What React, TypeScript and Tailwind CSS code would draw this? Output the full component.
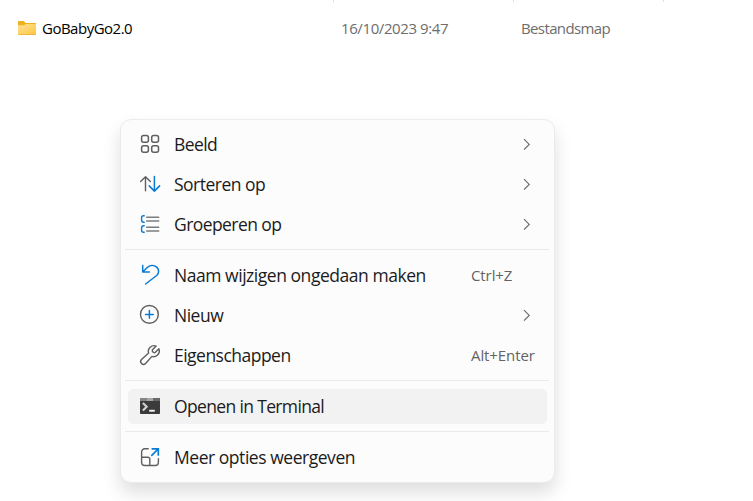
import type { ReactNode } from "react";

const GRAY = "#5f5f5f";
const BLUE = "#0a7bd4";

function Icon({ children }: { children: ReactNode }) {
  return (
    <svg width="24" height="24" viewBox="0 0 24 24" fill="none" stroke={GRAY} strokeWidth="1.4" strokeLinecap="round" strokeLinejoin="round" className="shrink-0">
      {children}
    </svg>
  );
}

const ViewIcon = () => (
  <Icon>
    <g strokeWidth="1.5">
      <rect x="3.6" y="3.6" width="6.8" height="6.6" rx="2" />
      <rect x="13.7" y="3.6" width="6.8" height="6.6" rx="2" />
      <rect x="3.6" y="13.7" width="6.8" height="6.6" rx="2" />
      <rect x="13.7" y="13.7" width="6.8" height="6.6" rx="2" />
    </g>
  </Icon>
);

const SortIcon = () => (
  <Icon>
    <path d="M7.5 18.8V4.8M2.6 9.6l4.9-4.9 4.9 4.9" />
    <path stroke={BLUE} strokeWidth="1.5" d="M16.4 4.6v14.4M11.2 13.9l5.2 5.2 5.2-5.2" />
  </Icon>
);

const GroupIcon = () => (
  <Icon>
    <path stroke="#7c7c7c" strokeWidth="1.5" d="M8.7 5.2h12M8.7 8.9h12M8.7 15.2h12M8.7 18.9h12" />
    <path stroke={BLUE} d="M6.2 3.8H5.6a2 2 0 0 0-2 2v2.4a2 2 0 0 0 2 2h.6M6.2 13.8H5.6a2 2 0 0 0-2 2v2.4a2 2 0 0 0 2 2h.6" />
  </Icon>
);

const UndoIcon = () => (
  <Icon>
    <path stroke={BLUE} strokeWidth="1.5" d="M4.7 2.4v6.5h6.7M4.9 8.7l4.6-4.4c2.8-2.5 6.6-2.5 9.2-.2 2.6 2.5 2.5 5.9 0 8.4L7.6 21" />
  </Icon>
);

const NewIcon = () => (
  <Icon>
    <circle cx="11.4" cy="11.4" r="8.9" />
    <path stroke={BLUE} strokeWidth="1.5" d="M11.4 7.5v7.8M7.5 11.4h7.8" />
  </Icon>
);

const WrenchIcon = () => (
  <Icon>
    <path d="M18.2 3.1a5.7 5.7 0 0 0-7.6 7L3.5 16.4a2.9 2.9 0 0 0 4.1 4.1l6.3-7.1a5.7 5.7 0 0 0 7-7.6l-3.5 3.5c-.6.6-1.5.6-2.1 0l-.6-.6c-.6-.6-.6-1.5 0-2.1z" />
  </Icon>
);

const TerminalIcon = () => (
  <Icon>
    <g stroke="none">
      <rect x="2" y="4" width="20" height="16" rx="0.8" fill="#3b3b3b" />
      <path fill="#858585" d="M2 4.8a.8.8 0 0 1 .8-.8H9v3H2z" />
      <path fill="#a5a5a5" d="M9 4h6.5v3H9z" />
      <path fill="#686868" d="M15.5 4h5.7a.8.8 0 0 1 .8.8V7h-6.5z" />
      <path fill="#f3f3f3" d="M11.2 15.8h5.6v1.9h-5.6z" />
    </g>
    <path stroke="#d2d2d2" strokeWidth="2.1" strokeLinecap="butt" strokeLinejoin="miter" d="M4.9 9l3.8 3.8-3.8 3.8" />
  </Icon>
);

const MoreIcon = () => (
  <Icon>
    <path d="M10.2 3.7H6.8a3.2 3.2 0 0 0-3.2 3.2v10.4a3.2 3.2 0 0 0 3.2 3.2h10.4a3.2 3.2 0 0 0 3.2-3.2v-3.5M3.7 12.3h6.1a2 2 0 0 1 2 2v6.1" />
    <path stroke={BLUE} strokeWidth="1.7" strokeLinejoin="miter" d="M14.2 3.8h6.1v6.1M20.1 4L13.8 10.3" />
  </Icon>
);

const Chevron = () => (
  <svg width="8" height="12" viewBox="0 0 8 12" fill="none" stroke="#6a6a6a" strokeWidth="1.2">
    <path d="M1 1.2l5.2 5.2L1 11.6" />
  </svg>
);

const FolderIcon = () => (
  <svg width="18" height="14" viewBox="0 0 18 14" className="mb-px shrink-0">
    <defs>
      <linearGradient id="folder" x1="0" y1="0" x2="1" y2="1">
        <stop offset="0" stopColor="#ffe196" />
        <stop offset="1" stopColor="#fcc63f" />
      </linearGradient>
    </defs>
    <path d="M0 .6Q0 0 .6 0H5.8L7.6 1.9H17.4Q18 1.9 18 2.5V8H0z" fill="#eeb01e" />
    <path d="M0 4.2H6L7.8 2.9H18V13.4Q18 14 17.4 14H.6Q0 14 0 13.4z" fill="url(#folder)" />
    <path d="M.3 13.5H17.7" stroke="#e9b336" strokeWidth="0.8" />
  </svg>
);

type ItemProps = {
  icon: ReactNode;
  label: string;
  tracking: string;
  shortcut?: string;
  submenu?: boolean;
  active?: boolean;
};

function Item({ icon, label, tracking, shortcut, submenu, active }: ItemProps) {
  return (
    <div className="h-10 px-[7px] pt-[3px] pb-0.5">
      <div className={`flex h-[35px] items-center rounded-[5px] pb-px pl-2.5 ${active ? "bg-[#f2f2f2]" : ""}`}>
        {icon}
        <span className={`ml-3 flex-1 whitespace-nowrap text-[17.5px] leading-6 text-[#1b1b1b] ${tracking}`}>{label}</span>
        {shortcut && (
          <span className="w-[76px] whitespace-nowrap text-[15px] leading-6 tracking-[-0.1px] text-[#636363]">{shortcut}</span>
        )}
        {submenu && (
          <span className="mr-4">
            <Chevron />
          </span>
        )}
      </div>
    </div>
  );
}

const Separator = () => <div className="my-[5px] mr-[5px] ml-1 h-px bg-[#eaeaea]" />;

export default function App() {
  return (
    <div className="relative h-[501px] w-[753px] overflow-hidden bg-white font-['Open_Sans','Noto_Sans',sans-serif]">
      <div className="flex h-0.5">
        <div className="w-[334px] border-r border-[#dedede]" />
        <div className="w-[180px] border-r border-[#dedede]" />
        <div className="w-[150px] border-r border-[#dedede]" />
      </div>
      <div className="mt-3 flex h-7 items-center pl-[18px] text-[15px] leading-6">
        <FolderIcon />
        <span className="ml-1.5 w-[299px] tracking-[-0.5px] text-black">GoBabyGo2.0</span>
        <span className="w-[180px] tracking-[-0.4px] text-[#6d6d6d]">16/10/2023 9:47</span>
        <span className="tracking-[-0.62px] text-[#6d6d6d]">Bestandsmap</span>
      </div>

      <div className="absolute left-[120px] top-[119px] h-[364px] w-[435px] rounded-[11px] border border-[#ebebeb] bg-[#fcfcfc] pt-1 shadow-[0_10px_18px_rgba(0,0,0,0.13)]">
        <Item icon={<ViewIcon />} label="Beeld" tracking="tracking-[-0.6px]" submenu />
        <Item icon={<SortIcon />} label="Sorteren op" tracking="tracking-[-0.5px]" submenu />
        <Item icon={<GroupIcon />} label="Groeperen op" tracking="tracking-[-0.57px]" submenu />
        <Separator />
        <Item icon={<UndoIcon />} label="Naam wijzigen ongedaan maken" tracking="tracking-[-0.46px]" shortcut="Ctrl+Z" />
        <Item icon={<NewIcon />} label="Nieuw" tracking="tracking-[-0.5px]" submenu />
        <Item icon={<WrenchIcon />} label="Eigenschappen" tracking="tracking-[-0.52px]" shortcut="Alt+Enter" />
        <Separator />
        <Item icon={<TerminalIcon />} label="Openen in Terminal" tracking="tracking-[-0.65px]" active />
        <Separator />
        <Item icon={<MoreIcon />} label="Meer opties weergeven" tracking="tracking-[-0.46px]" />
      </div>
    </div>
  );
}
